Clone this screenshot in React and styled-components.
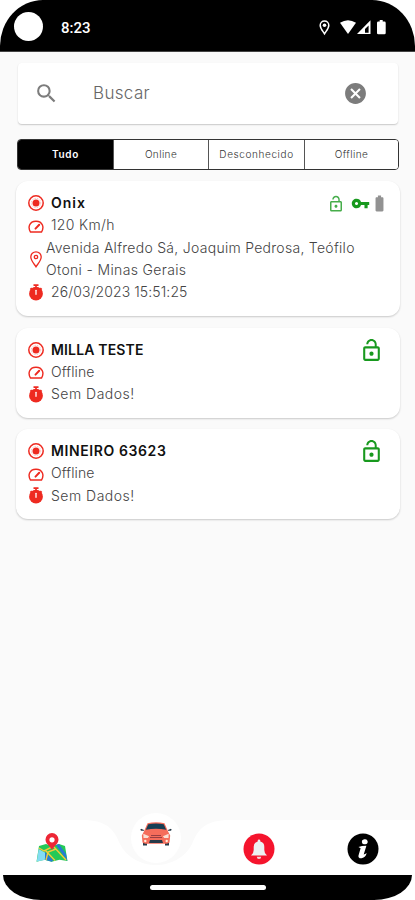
import React from "react";
import styled, { createGlobalStyle } from "styled-components";
import { MdSearch, MdCancel, MdLockOpen, MdVpnKey, MdBatteryFull } from "react-icons/md";

const GlobalStyle = createGlobalStyle`
  * { box-sizing: border-box; }
  body { margin: 0; background: #fff; font-family: Inter, "Open Sans", sans-serif; }
  svg { display: block; flex: none; }
`;

const Phone = styled.div`
  width: 415px;
  height: 900px;
  display: flex;
  flex-direction: column;
  overflow: hidden;
  background: #fff;
`;

const StatusBar = styled.header`
  height: 52px;
  flex: none;
  display: flex;
  align-items: center;
  padding: 2px 27px 0 14px;
  background: #000;
  border-bottom: 1px solid #444;
  border-radius: 43px 43px 0 0 / 46px 46px 0 0;
`;

const Camera = styled.div`
  width: 29px;
  height: 29px;
  border-radius: 50%;
  background: #fff;
`;

const Clock = styled.time`
  margin-left: 18px;
  flex: 1;
  color: #fff;
  font: 500 15px/20px Roboto, sans-serif;
  padding-top: 3px;
`;

const Screen = styled.main`
  flex: 1;
  background: #fafafa;
  padding: 11px 15px 0 16px;
`;

const SearchBox = styled.div`
  height: 61px;
  margin: 0 2px;
  padding: 0 30px 0 16px;
  display: flex;
  align-items: center;
  background: #fff;
  border-radius: 4px;
  box-shadow: 0 1px 1.5px rgba(0, 0, 0, 0.2);
  color: #7c7c7c;
`;

const SearchLabel = styled.span`
  flex: 1;
  margin: -2px 0 0 34px;
  font-size: 17px;
  font-weight: 300;
  letter-spacing: 0.35px;
  color: #666;
`;

const Tabs = styled.nav`
  display: grid;
  grid-template-columns: 95px 95px 96px 94px;
  height: 31px;
  margin: 15px 1px 11px;
  border: 1px solid #333;
  border-radius: 4px;
  background: #fff;
  overflow: hidden;
`;

const Tab = styled.div`
  display: flex;
  align-items: center;
  justify-content: center;
  padding-bottom: 2px;
  font-size: 10px;
  font-weight: ${(p) => (p.$active ? 600 : 300)};
  letter-spacing: ${(p) => p.$spacing ?? 0.4}px;
  color: ${(p) => (p.$active ? "#fff" : "#333")};
  background: ${(p) => (p.$active ? "#000" : "#fff")};
  & + & { border-left: 1px solid #555; }
`;

const Card = styled.article`
  display: flex;
  justify-content: space-between;
  height: ${(p) => p.$height}px;
  margin-bottom: 11.5px;
  padding: 11px 16px 0 12px;
  background: #fff;
  border-radius: 12px;
  box-shadow: 0 1px 2px rgba(0, 0, 0, 0.2);
`;

const Details = styled.div`
  flex: 1;
  min-width: 0;
  display: flex;
  flex-direction: column;
`;

const Row = styled.div`
  display: flex;
  align-items: center;
  gap: ${(p) => (p.$tight ? 2 : 7)}px;
  min-height: 22.4px;
`;

const Value = styled.span`
  font-size: 14px;
  line-height: 22.3px;
  font-weight: ${(p) => (p.$strong ? 600 : 300)};
  color: ${(p) => (p.$strong ? "#111" : "#444")};
  letter-spacing: ${(p) => p.$spacing || 0}px;
  white-space: nowrap;
`;

const Line = styled.span`
  display: block;
  letter-spacing: ${(p) => p.$spacing || 0}px;
`;

const Indicators = styled.div`
  display: flex;
  flex: none;
  width: 62px;
  justify-content: flex-end;
  align-items: center;
  height: 23px;
  color: #18991e;
`;

const KeyIcon = styled(MdVpnKey)`
  margin-left: 6px;
`;

const BatteryIcon = styled(MdBatteryFull)`
  color: #929292;
  margin-right: -5px;
`;

const BottomNav = styled.footer`
  position: relative;
  height: 70px;
  flex: none;
  background: #fafafa;
`;

const NavShape = styled.svg`
  position: absolute;
  inset: 0;
`;

const NavItems = styled.div`
  position: relative;
  display: grid;
  grid-template-columns: repeat(4, 1fr);
  justify-items: center;
  padding-top: 28px;
`;

const NavItem = styled.div`
  margin-top: ${(p) => (p.$raised ? -11 : 0)}px;
`;

const HomeBar = styled.div`
  height: 25px;
  flex: none;
  margin: 0 3px;
  display: flex;
  justify-content: center;
  padding-top: 10px;
  background: #000;
  border-radius: 0 0 38px 38px / 0 0 25px 25px;
`;

const HomeHandle = styled.div`
  width: 116px;
  height: 5px;
  border-radius: 3px;
  background: #fff;
`;

const TargetIcon = () => (
  <svg width="16" height="16" viewBox="0 0 16 16" fill="none" stroke="#ee2a20">
    <circle cx="8" cy="8" r="7.2" strokeWidth="1.5" />
    <circle cx="8" cy="8" r="4.7" strokeWidth=".6" strokeDasharray="1.5 1" opacity=".45" />
    <circle cx="8" cy="8" r="3.5" fill="#ee2a20" stroke="none" />
  </svg>
);

const GaugeIcon = () => (
  <svg width="16" height="16" viewBox="0 0 16 16" fill="none" stroke="#ee2a20" strokeWidth="1.4" strokeLinecap="round" strokeLinejoin="round">
    <path d="M2.5 14C-.3 9.700 1 3.200 8 3.200s8.300 6.500 5.500 10.800Z" />
    <path d="M7.500 10.600 11.200 6.800" strokeWidth="2" />
  </svg>
);

const PinIcon = () => (
  <svg width="16" height="17" viewBox="0 0 16 17" fill="none" stroke="#ee2a20" strokeWidth="1.3">
    <path d="M8 15.8C6 12.7 2.8 9.4 2.8 6a5.2 5.2 0 0 1 10.4 0c0 3.4-3.2 6.7-5.2 9.8Z" />
    <circle cx="8" cy="6" r="1.7" />
  </svg>
);

const StopwatchIcon = () => (
  <svg width="16" height="17" viewBox="0 0 16 17">
    <path d="M5.5 .3h5v1.700h-5zM7.200 2h1.600v2H7.200z" fill="#ee2a20" />
    <path d="m12.3 4 1.500 1.500M3.700 4 2.300 5.400" stroke="#ee2a20" strokeWidth="1.4" />
    <circle cx="8" cy="9.700" r="6.900" fill="#ee2a20" />
    <path d="M8 6.300v4" stroke="#fff" strokeWidth="1.3" strokeLinecap="round" />
  </svg>
);

const StatusIcons = () => (
  <svg width="70" height="18" viewBox="0 0 70 18" fill="#fff">
    <path d="M6.500 15.800C4.800 13 2.200 10.500 2.200 7.200a4.300 4.300 0 0 1 8.600 0c0 3.300-2.600 5.800-4.300 8.600Z" fill="none" stroke="#fff" strokeWidth="1.5" />
    <circle cx="6.500" cy="7.300" r="1.800" />
    <path d="M22 4.800q8-5 16 0L30 15.900Z" />
    <path fillRule="evenodd" d="M39 16 52.500 2.300V16Zm8-1.300h3.600V7.500L47 11Z" />
    <path d="M61.700 2h3v1.600h1.700q1.300 0 1.300 1.300v10q0 1.300-1.300 1.300h-6q-1.400 0-1.400-1.300v-10q0-1.300 1.400-1.300h1.300Z" />
  </svg>
);

const MapIcon = () => (
  <svg width="32" height="30" viewBox="0 0 32 30">
    <path d="m3 13 7-2 6 2 7-2 6 2 2.500 15-8-1.200-8 2-7-2-8 2Z" fill="#24c957" />
    <path d="m2.700 16 7 4-1 7-8 1.500Z" fill="#83dcf2" />
    <path d="m9 19 8 8-1 1.800-7-2Z" fill="#277bd2" />
    <path d="m20 12 3-1 7 10 1.300 7Z" fill="#277bd2" />
    <path d="m3 15 5 3 10-5M9 17l10 10.500M18 14l12 13M10 27l2-8 8-3" fill="none" stroke="#f4c83b" strokeWidth="1.4" />
    <path d="M16 17c-2-4-6.500-6-6.500-10.400a6.500 6.500 0 0 1 13 0C22.500 11 18 13 16 17Z" fill="#ed2635" />
    <circle cx="16" cy="6.800" r="2.600" fill="#fff" />
  </svg>
);

const CarIcon = () => (
  <svg width="32" height="26" viewBox="0 0 32 26">
    <path d="M3 18h4v5.500H3zM25 18h4v5.500h-4z" fill="#263a49" />
    <path d="m4 8-3-1.200q-1.200 1 .2 2H4M28 8l3-1.200q1.200 1-.2 2H28" fill="#263a49" />
    <path d="M7.500 1.200q8.500-2 17 0l3.700 8.500 2 3.800-.7 7q-1 1-3 1.200h-21q-2-.2-3-1.200l-.7-7 2-3.800Z" fill="#f56d5b" />
    <path d="M8.300 2.200q7.700-1.600 15.400 0l2.500 5.500q-10.200-1.700-20.400 0Z" fill="#173e54" />
    <path d="m3.300 11.700 5.800 2.500-1.300 1.700H3.500ZM28.700 11.700l-5.800 2.500 1.300 1.700h4.300Z" fill="#f9e0d5" />
    <path d="M11 13.500h10M10 15.500h12" stroke="#993e42" strokeWidth="1" />
    <path d="M10 18h12l1 3H9Z" fill="#263a49" />
    <circle cx="5.300" cy="19" r="1.200" fill="#fff0db" />
    <circle cx="26.700" cy="19" r="1.200" fill="#fff0db" />
  </svg>
);

const BellIcon = () => (
  <svg width="32" height="32" viewBox="0 0 32 32">
    <circle cx="16" cy="16" r="15.500" fill="#f5142d" />
    <path d="M8 22.500q2.700-2 2.700-5.500v-3.300q0-4.200 4-5.200V7.700a1.300 1.300 0 0 1 2.600 0v.8q4 1 4 5.200V17q0 3.500 2.700 5.500Z" fill="#edf1f2" />
    <path d="M13.800 23.700h4.400a2.200 2.200 0 0 1-4.400 0Z" fill="#f6d4d8" />
  </svg>
);

const InfoIcon = () => (
  <svg width="32" height="32" viewBox="0 0 32 32">
    <circle cx="16" cy="16" r="15.500" fill="#000" />
    <ellipse cx="17.800" cy="8.800" rx="2.900" ry="2.500" fill="#fff" transform="rotate(-12 17.8 8.800)" />
    <path d="M11.500 14q3-1.200 7.900-1.200l-2.700 8.700q1.400-.1 2.900-1.400-.7 4.500-5 5.100-3.700.2-3.100-2.800l2.100-7.200Z" fill="#fff" />
  </svg>
);

const vehicles = [
  {
    name: "Onix", nameSpacing: 1, height: 135, online: true,
    status: "120 Km/h", statusSpacing: 0.35,
    address: [["Avenida Alfredo Sá, Joaquim Pedrosa, Teófilo", 0.28], ["Otoni - Minas Gerais", 0.35]],
    date: "26/03/2023 15:51:25", dateSpacing: 0.1,
  },
  { name: "MILLA TESTE", nameSpacing: 0.15, height: 90, status: "Offline", statusSpacing: 0.1, date: "Sem Dados!", dateSpacing: 0.5 },
  { name: "MINEIRO 63623", nameSpacing: 0.6, height: 90, status: "Offline", statusSpacing: 0.1, date: "Sem Dados!", dateSpacing: 0.5 },
];

const VehicleCard = ({ vehicle: v }) => (
  <Card $height={v.height}>
    <Details>
      <Row><TargetIcon /><Value $strong $spacing={v.nameSpacing}>{v.name}</Value></Row>
      <Row><GaugeIcon /><Value $spacing={v.statusSpacing}>{v.status}</Value></Row>
      {v.address && (
        <Row $tight>
          <PinIcon />
          <Value>{v.address.map(([text, spacing]) => <Line key={text} $spacing={spacing}>{text}</Line>)}</Value>
        </Row>
      )}
      <Row><StopwatchIcon /><Value $spacing={v.dateSpacing}>{v.date}</Value></Row>
    </Details>
    <Indicators>
      {v.online ? (
        <><MdLockOpen size={18} opacity={0.8} /><KeyIcon size={19} /><BatteryIcon size={19} /></>
      ) : <MdLockOpen size={25} />}
    </Indicators>
  </Card>
);

export default function App() {
  return (
    <Phone>
      <GlobalStyle />
      <StatusBar><Camera /><Clock>8:23</Clock><StatusIcons /></StatusBar>
      <Screen>
        <SearchBox><MdSearch size={25} /><SearchLabel>Buscar</SearchLabel><MdCancel size={25} /></SearchBox>
        <Tabs>
          <Tab $active $spacing={0.7}>Tudo</Tab>
          <Tab>Online</Tab>
          <Tab $spacing={0.6}>Desconhecido</Tab>
          <Tab>Offline</Tab>
        </Tabs>
        {vehicles.map((v) => <VehicleCard key={v.name} vehicle={v} />)}
      </Screen>
      <BottomNav>
        <NavShape width="415" height="70" viewBox="0 0 415 70">
          <path d="M0 15h82c26 0 32 10 38 24 14 28 58 28 72 0 6-14 12-24 38-24h185v55H0Z" fill="#fff" />
          <circle cx="156" cy="33" r="25" fill="#fff" />
        </NavShape>
        <NavItems>
          <NavItem><MapIcon /></NavItem>
          <NavItem $raised><CarIcon /></NavItem>
          <NavItem><BellIcon /></NavItem>
          <NavItem><InfoIcon /></NavItem>
        </NavItems>
      </BottomNav>
      <HomeBar><HomeHandle /></HomeBar>
    </Phone>
  );
}
